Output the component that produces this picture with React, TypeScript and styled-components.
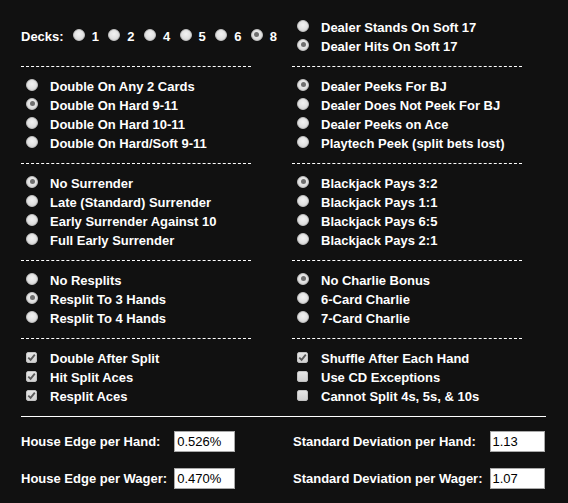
import styled, { createGlobalStyle } from 'styled-components';

const GlobalStyle = createGlobalStyle`
  html, body {
    margin: 0;
    background: #111111;
  }
  body {
    font-family: "Liberation Sans", Arial, sans-serif;
    color: #ffffff;
  }
`;

const Page = styled.div`
  width: 525px;
  padding: 18px 0 0 21px;
`;

const Columns = styled.div`
  display: grid;
  grid-template-columns: 230px 230px;
  column-gap: 41px;
`;

const Group = styled.div<{ $center?: boolean }>`
  display: flex;
  flex-direction: column;
  align-self: ${(p) => (p.$center ? 'center' : 'start')};
`;

const Option = styled.div`
  display: flex;
  align-items: center;
  height: 19px;
  padding-left: 5px;
  font-size: 13px;
  font-weight: 700;
  white-space: nowrap;
`;

const Radio = styled.span<{ $checked?: boolean }>`
  flex: none;
  position: relative;
  width: 12px;
  height: 12px;
  margin: 0 12px 4px 0;
  border-radius: 50%;
  box-sizing: border-box;
  border: 1px solid #c4c4c4;
  background: radial-gradient(circle at 50% 40%, #f2f2f2 0%, #e2e2e2 55%, #c9c9c9 100%);

  &::after {
    content: '';
    display: ${(p) => (p.$checked ? 'block' : 'none')};
    position: absolute;
    left: 2.5px;
    top: 2.5px;
    width: 5px;
    height: 5px;
    border-radius: 50%;
    background: #6f6f6f;
  }
`;

const Box = styled.span`
  flex: none;
  display: flex;
  align-items: center;
  justify-content: center;
  width: 11px;
  height: 11px;
  margin: 0 13px 3px 0;
  box-sizing: border-box;
  border-radius: 2px;
  border: 1px solid #c2c2c2;
  background: linear-gradient(#e6e6e6, #d2d2d2);
`;

const DeckRow = styled.div`
  display: flex;
  align-items: center;
  height: 19px;
  margin-bottom: 2px;
  font-size: 13px;
  font-weight: 700;
`;

const DeckLabel = styled.span`
  margin-right: 9px;
`;

const DeckOption = styled.span`
  display: flex;
  align-items: center;
  margin-right: 9.4px;

  ${Radio} {
    margin-right: 7px;
    margin-bottom: 3px;
  }
`;

const Dashed = styled.div`
  height: 0;
  margin: 10px 0;
  border-top: 1px dashed #ffffff;
`;

const Rule = styled.div`
  height: 0;
  margin: 10px 0 14px;
  border-top: 1px solid #ffffff;
`;

const Stats = styled.div`
  display: grid;
  grid-template-columns: 230px 254px;
  column-gap: 42px;
`;

const StatGrid = styled.div`
  display: grid;
  grid-template-columns: max-content max-content;
  column-gap: 7px;
  row-gap: 16px;
  align-items: center;
  font-size: 13px;
  font-weight: 700;
`;

const Value = styled.input<{ $w: number }>`
  width: ${(p) => p.$w}px;
  height: 21px;
  box-sizing: border-box;
  margin: 0;
  padding: 0 2px;
  border: 1px solid #a9a9a9;
  background: #ffffff;
  color: #000000;
  font-family: "Liberation Sans", Arial, sans-serif;
  font-size: 13px;
  outline: none;
`;

function Tick() {
  return (
    <svg width="9" height="9" viewBox="0 0 9 9">
      <path d="M1.3 4.6 L3.6 6.9 L7.8 1.6" fill="none" stroke="#5a5a5a" strokeWidth="1.8" />
    </svg>
  );
}

type Opt = [string, boolean];

function Radios({ items }: { items: Opt[] }) {
  return (
    <Group>
      {items.map(([label, on]) => (
        <Option key={label}>
          <Radio $checked={on} />
          {label}
        </Option>
      ))}
    </Group>
  );
}

function Checks({ items }: { items: Opt[] }) {
  return (
    <Group>
      {items.map(([label, on]) => (
        <Option key={label}>
          <Box>{on && <Tick />}</Box>
          {label}
        </Option>
      ))}
    </Group>
  );
}

function Dividers() {
  return (
    <Columns>
      <Dashed />
      <Dashed />
    </Columns>
  );
}

const decks = ['1', '2', '4', '5', '6', '8'];

export default function App() {
  return (
    <Page>
      <GlobalStyle />
      <Columns>
        <Group $center>
          <DeckRow>
            <DeckLabel>Decks:</DeckLabel>
            {decks.map((d) => (
              <DeckOption key={d}>
                <Radio $checked={d === '8'} />
                {d}
              </DeckOption>
            ))}
          </DeckRow>
        </Group>
        <Radios
          items={[
            ['Dealer Stands On Soft 17', false],
            ['Dealer Hits On Soft 17', true],
          ]}
        />
      </Columns>
      <Dividers />
      <Columns>
        <Radios
          items={[
            ['Double On Any 2 Cards', false],
            ['Double On Hard 9-11', true],
            ['Double On Hard 10-11', false],
            ['Double On Hard/Soft 9-11', false],
          ]}
        />
        <Radios
          items={[
            ['Dealer Peeks For BJ', true],
            ['Dealer Does Not Peek For BJ', false],
            ['Dealer Peeks on Ace', false],
            ['Playtech Peek (split bets lost)', false],
          ]}
        />
      </Columns>
      <Dividers />
      <Columns>
        <Radios
          items={[
            ['No Surrender', true],
            ['Late (Standard) Surrender', false],
            ['Early Surrender Against 10', false],
            ['Full Early Surrender', false],
          ]}
        />
        <Radios
          items={[
            ['Blackjack Pays 3:2', true],
            ['Blackjack Pays 1:1', false],
            ['Blackjack Pays 6:5', false],
            ['Blackjack Pays 2:1', false],
          ]}
        />
      </Columns>
      <Dividers />
      <Columns>
        <Radios
          items={[
            ['No Resplits', false],
            ['Resplit To 3 Hands', true],
            ['Resplit To 4 Hands', false],
          ]}
        />
        <Radios
          items={[
            ['No Charlie Bonus', true],
            ['6-Card Charlie', false],
            ['7-Card Charlie', false],
          ]}
        />
      </Columns>
      <Dividers />
      <Columns>
        <Checks
          items={[
            ['Double After Split', true],
            ['Hit Split Aces', true],
            ['Resplit Aces', true],
          ]}
        />
        <Checks
          items={[
            ['Shuffle After Each Hand', true],
            ['Use CD Exceptions', false],
            ['Cannot Split 4s, 5s, & 10s', false],
          ]}
        />
      </Columns>
      <Rule />
      <Stats>
        <StatGrid>
          <span>House Edge per Hand:</span>
          <Value $w={61} readOnly value="0.526%" />
          <span>House Edge per Wager:</span>
          <Value $w={61} readOnly value="0.470%" />
        </StatGrid>
        <StatGrid>
          <span>Standard Deviation per Hand:</span>
          <Value $w={55} readOnly value="1.13" />
          <span>Standard Deviation per Wager:</span>
          <Value $w={55} readOnly value="1.07" />
        </StatGrid>
      </Stats>
    </Page>
  );
}
